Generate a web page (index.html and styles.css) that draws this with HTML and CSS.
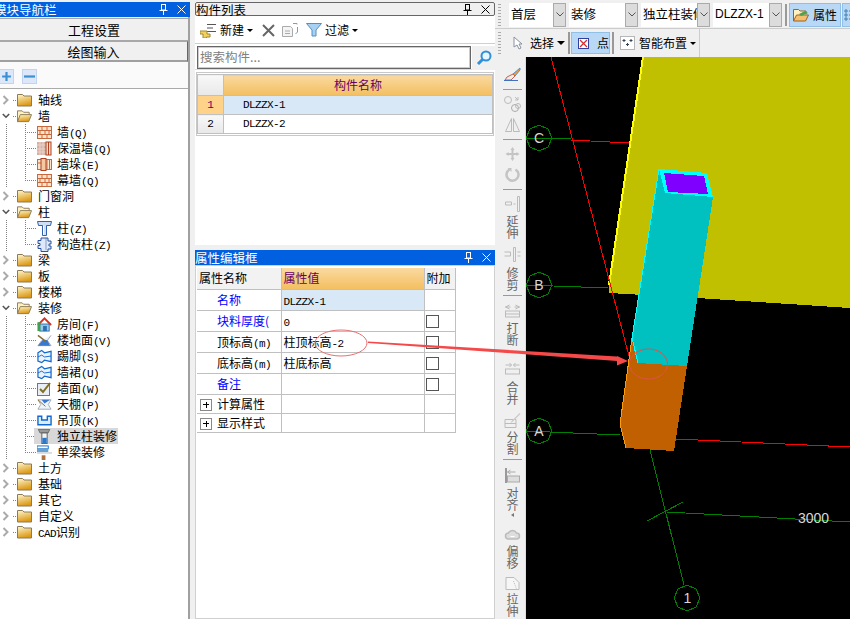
FILE: index.html
```html
<!DOCTYPE html>
<html lang="zh">
<head>
<meta charset="utf-8">
<title>构件</title>
<link rel="stylesheet" href="styles.css">
</head>
<body>
<svg class="defs" aria-hidden="true">
  <defs>
    <linearGradient id="fold" x1="0" y1="0" x2="0.3" y2="1"><stop offset="0" stop-color="#fff8d0"/><stop offset="1" stop-color="#dd9a18"/></linearGradient>
    <symbol id="folder" viewBox="0 0 15 14"><path d="M.5 3V1.500h5l1.500 1.500h7.500v10H.5z" fill="url(#fold)" stroke="#8a7a58"/></symbol>
    <symbol id="folderopen" viewBox="0 0 16 14"><path d="M.5 13V1.500h5L7 3h6v2.500" fill="#fff2c0" stroke="#8a7a58"/><path d="M.5 13l3-7.500h12l-3 7.500z" fill="url(#fold)" stroke="#8a7a58"/></symbol>
    <symbol id="chevr" viewBox="0 0 8 10"><path d="M1.500 1l4 4-4 4" fill="none" stroke="#aaa" stroke-width="2"/></symbol>
    <symbol id="chevd" viewBox="0 0 10 8"><path d="M1 1.500l4 4 4-4" fill="none" stroke="#555" stroke-width="2"/></symbol>
    <symbol id="brick" viewBox="0 0 15 13"><rect x=".5" y=".5" width="14" height="12" fill="#fbe4cc" stroke="#c8683c"/><path d="M.5 4.500h14M.5 8.500h14M5 .5v4M10 .5v4M3 4.500v4M8 4.500v4M12 4.500v4M5 8.500v4M10 8.500v4" stroke="#c8683c" fill="none"/></symbol>
    <symbol id="insul" viewBox="0 0 15 13"><rect width="9" height="13" fill="#d8b0a4"/><path d="M0 3h9M0 7h9M0 10h9M3 0v13M6 0v13" stroke="#e8d4cc"/><rect x="9" width="5" height="13" fill="#f4dcc8" stroke="#b04020"/><path d="M11.500 0v13" stroke="#b04020"/></symbol>
    <symbol id="pier" viewBox="0 0 15 13"><rect x=".5" y="1.500" width="14" height="10" fill="#fbe4cc" stroke="#c8683c"/><path d="M10 1.500v10M12.500 1.500v10M.5 5h5" stroke="#c8683c"/><rect x="4" y=".5" width="5" height="12" fill="#f4c8a0" stroke="#b04020"/></symbol>
    <symbol id="colm" viewBox="0 0 15 15"><path d="M.5.5h14l-1 4h-4v10h-4v-10h-4z" fill="#cfe0f6" stroke="#3060b0"/><path d="M6.500 5v9" stroke="#fff"/></symbol>
    <symbol id="cons" viewBox="0 0 15 14"><path d="M4 .5h7v3h3v3h-2v2h2v3h-3v2.500H4V11H1V8h2V6H1V3h3z" fill="#dfe8f8" stroke="#2850a0"/><path d="M9 1v12" stroke="#2850a0" stroke-dasharray="1 1"/></symbol>
    <symbol id="room" viewBox="0 0 16 15"><path d="M1 8l7-7 7 7" fill="#fff" stroke="#d83020" stroke-width="2"/><rect x="3" y="7" width="10" height="7.500" fill="#9cc8e8" stroke="#2870b0"/><rect x="6.500" y="9" width="4" height="5.500" fill="#2870b0"/><rect x=".5" y="5" width="3" height="9.500" fill="#40a050"/></symbol>
    <symbol id="floor" viewBox="0 0 16 13"><path d="M15 1L11 6.500 15 12H1l4-5.500" fill="#e8f0f8" stroke="#a0a8b4"/><path d="M1 12l5-6h5l3 6z" fill="#3878d0"/><path d="M1 1l9 7" stroke="#8a6a30" stroke-width="1.500"/></symbol>
    <symbol id="skirt" viewBox="0 0 16 14"><path d="M1 3l4-2.500 3 2.500 7-1.500v11L8 11 5 13.500 1 12z" fill="#eaf3fc" stroke="#1068d0" stroke-width="1.300"/><path d="M1 7.500l4-2 3 2 7-1" stroke="#1068d0" fill="none"/></symbol>
    <symbol id="face" viewBox="0 0 15 15"><rect x=".5" y="2.500" width="12" height="12" fill="#e8eef8" stroke="#687890"/><path d="M3 8l3 3 7-9" fill="none" stroke="#807020" stroke-width="2"/></symbol>
    <symbol id="ceil" viewBox="0 0 16 12"><path d="M1 1h14l-3 5 3 5H1l3-5z" fill="#eef4fa" stroke="#a0a8b4"/><path d="M8 5l6-4H5z" fill="#3878d0"/><path d="M1 1l8 7" stroke="#8a6a30"/></symbol>
    <symbol id="hang" viewBox="0 0 16 11"><path d="M1 1v9h14V1h-4v4H5V1z" fill="#dcebfa" stroke="#1068d0" stroke-width="1.500"/></symbol>
    <symbol id="colfin" viewBox="0 0 16 17"><path d="M1 .5h13l-2 4H3z" fill="#9a9a9a" stroke="#666"/><rect x="5" y="4.500" width="6" height="12" fill="#f4f4f4" stroke="#555"/><rect x="5.500" y="10" width="5" height="6" fill="#2878d0"/></symbol>
    <symbol id="beam" viewBox="0 0 16 16"><rect y="1" width="12" height="3" fill="#fff" stroke="#1068d0"/><rect y="3.500" width="12" height="4" fill="#68a0d0"/><path d="M0 8.500h16" stroke="#b0b8c4"/><rect x="5" y="11" width="4" height="5" fill="#b07040"/></symbol>
    <symbol id="mag" viewBox="0 0 16 16"><circle cx="10" cy="6" r="4.500" fill="#e8f6ff" stroke="#3090d8" stroke-width="2"/><path d="M6.500 9.500L2 14" stroke="#3090d8" stroke-width="3"/></symbol>
  </defs>
</svg>

<aside class="nav">
  <div class="title title-blue"><span class="title-text shift">模块导航栏</span><span class="winbtns"><svg class="pin" viewBox="0 0 9 11"><path d="M2 .5h5M2.500.5v5.500h4V.5M.5 6.500h8M4.500 6.500V11" fill="none" stroke="currentColor"/></svg><svg class="close" viewBox="0 0 9 9"><path d="M.5.5l8 8M8.500.5l-8 8" stroke="currentColor"/></svg></span></div>
  <div class="navbtn navbtn-a">工程设置</div>
  <div class="navbtn navbtn-b">绘图输入</div>
  <div class="treetools">
    <span class="tbtn tbtn-plus"><svg viewBox="0 0 10 10"><path d="M5 1v8M1 5h8" stroke="#3a90d0" stroke-width="2"/></svg></span>
    <span class="tbtn"><svg viewBox="0 0 10 10"><path d="M0 5h10" stroke="#3a90d0" stroke-width="2"/></svg></span>
  </div>
  <div class="tree">
    <div class="row top trunk"><svg class="tw"><use href="#chevr"/></svg><svg class="fo"><use href="#folder"/></svg><span class="lb">轴线</span></div>
    <div class="row top trunk"><svg class="tw"><use href="#chevd"/></svg><svg class="fo"><use href="#folderopen"/></svg><span class="lb">墙</span></div>
    <div class="row kid"><svg class="ic"><use href="#brick"/></svg><span class="lc">墙<i>(Q)</i></span></div>
    <div class="row kid"><svg class="ic"><use href="#insul"/></svg><span class="lc">保温墙<i>(Q)</i></span></div>
    <div class="row kid"><svg class="ic"><use href="#pier"/></svg><span class="lc">墙垛<i>(E)</i></span></div>
    <div class="row kid last"><svg class="ic"><use href="#brick"/></svg><span class="lc">幕墙<i>(Q)</i></span></div>
    <div class="row top trunk"><svg class="tw"><use href="#chevr"/></svg><svg class="fo"><use href="#folder"/></svg><span class="lb">门窗洞</span></div>
    <div class="row top trunk"><svg class="tw"><use href="#chevd"/></svg><svg class="fo"><use href="#folderopen"/></svg><span class="lb">柱</span></div>
    <div class="row kid"><svg class="ic"><use href="#colm"/></svg><span class="lc">柱<i>(Z)</i></span></div>
    <div class="row kid last"><svg class="ic"><use href="#cons"/></svg><span class="lc">构造柱<i>(Z)</i></span></div>
    <div class="row top trunk"><svg class="tw"><use href="#chevr"/></svg><svg class="fo"><use href="#folder"/></svg><span class="lb">梁</span></div>
    <div class="row top trunk"><svg class="tw"><use href="#chevr"/></svg><svg class="fo"><use href="#folder"/></svg><span class="lb">板</span></div>
    <div class="row top trunk"><svg class="tw"><use href="#chevr"/></svg><svg class="fo"><use href="#folder"/></svg><span class="lb">楼梯</span></div>
    <div class="row top trunk"><svg class="tw"><use href="#chevd"/></svg><svg class="fo"><use href="#folderopen"/></svg><span class="lb">装修</span></div>
    <div class="row kid"><svg class="ic"><use href="#room"/></svg><span class="lc">房间<i>(F)</i></span></div>
    <div class="row kid"><svg class="ic"><use href="#floor"/></svg><span class="lc">楼地面<i>(V)</i></span></div>
    <div class="row kid"><svg class="ic"><use href="#skirt"/></svg><span class="lc">踢脚<i>(S)</i></span></div>
    <div class="row kid"><svg class="ic"><use href="#skirt"/></svg><span class="lc">墙裙<i>(U)</i></span></div>
    <div class="row kid"><svg class="ic"><use href="#face"/></svg><span class="lc">墙面<i>(W)</i></span></div>
    <div class="row kid"><svg class="ic"><use href="#ceil"/></svg><span class="lc">天棚<i>(P)</i></span></div>
    <div class="row kid"><svg class="ic"><use href="#hang"/></svg><span class="lc">吊顶<i>(K)</i></span></div>
    <div class="row kid"><span class="sel"><svg class="ic"><use href="#colfin"/></svg><span class="lc">独立柱装修</span></span></div>
    <div class="row kid last"><svg class="ic"><use href="#beam"/></svg><span class="lc">单梁装修</span></div>
    <div class="row top"><svg class="tw"><use href="#chevr"/></svg><svg class="fo"><use href="#folder"/></svg><span class="lb">土方</span></div>
    <div class="row top"><svg class="tw"><use href="#chevr"/></svg><svg class="fo"><use href="#folder"/></svg><span class="lb">基础</span></div>
    <div class="row top"><svg class="tw"><use href="#chevr"/></svg><svg class="fo"><use href="#folder"/></svg><span class="lb">其它</span></div>
    <div class="row top"><svg class="tw"><use href="#chevr"/></svg><svg class="fo"><use href="#folder"/></svg><span class="lb">自定义</span></div>
    <div class="row top"><svg class="tw"><use href="#chevr"/></svg><svg class="fo"><use href="#folder"/></svg><span class="lb"><i>CAD</i>识别</span></div>
  </div>
</aside>

<main class="mid">
  <section class="list">
    <div class="title title-grey"><span class="title-text">构件列表</span><span class="winbtns"><svg class="pin" viewBox="0 0 9 11"><path d="M2 .5h5M2.500.5v5.500h4V.5M.5 6.500h8M4.500 6.500V11" fill="none" stroke="currentColor"/></svg><svg class="close" viewBox="0 0 9 9"><path d="M.5.5l8 8M8.500.5l-8 8" stroke="currentColor"/></svg></span></div>
    <div class="listbar">
      <svg class="lb-new" viewBox="0 0 17 15"><path d="M7 1.500h9M7 5h6M7 8.500h9" stroke="#555" fill="none"/><path d="M3 8h4v3h3v3H6.500v1H3v-4H0V8z" fill="#f0d060" stroke="#a08830"/></svg>
      <span class="lb-txt">新建</span><span class="caret"></span>
      <svg class="lb-x" viewBox="0 0 13 13"><path d="M1 1l11 11M12 1L1 12" stroke="#666" stroke-width="2"/></svg>
      <svg class="lb-copy" viewBox="0 0 17 14"><path d="M.5 3.500h8l2 2v8H.5z" fill="#f4f4f4" stroke="#aaa"/><path d="M3 8h5M3 10.500h5" stroke="#aaa"/><path d="M11 .5h4v1M15.500 4v5l-2 2" fill="none" stroke="#70a0d0"/></svg>
      <svg class="lb-filter" viewBox="0 0 16 14"><path d="M.5.5h15L10 7v6H6V7z" fill="#a8d0f0" stroke="#5090c8"/></svg>
      <span class="lb-txt">过滤</span><span class="caret"></span>
    </div>
    <div class="searchbar">
      <div class="search">搜索构件...</div>
      <div class="searchbtn"><svg class="mag"><use href="#mag"/></svg></div>
    </div>
    <div class="gridwrap">
      <table class="grid">
        <tr class="g-head"><td class="g-num"></td><td class="g-title">构件名称</td></tr>
        <tr class="g-row g-on"><td class="g-num">1</td><td class="g-name">DLZZX-1</td></tr>
        <tr class="g-row"><td class="g-num">2</td><td class="g-name">DLZZX-2</td></tr>
      </table>
    </div>
  </section>
  <section class="props">
    <div class="title title-blue"><span class="title-text">属性编辑框</span><span class="winbtns"><svg class="pin" viewBox="0 0 9 11"><path d="M2 .5h5M2.500.5v5.500h4V.5M.5 6.500h8M4.500 6.500V11" fill="none" stroke="currentColor"/></svg><svg class="close" viewBox="0 0 9 9"><path d="M.5.5l8 8M8.500.5l-8 8" stroke="currentColor"/></svg></span></div>
    <div class="propbody">
      <table class="ptab">
        <colgroup><col class="c1"><col class="c2"><col class="c3"></colgroup>
        <tr class="p-head"><td class="p-h1">属性名称</td><td class="p-hv">属性值</td><td class="p-h3">附加</td></tr>
        <tr><td class="pn blue">名称</td><td class="pv pv-on"><i>DLZZX-1</i></td><td></td></tr>
        <tr><td class="pn blue">块料厚度(</td><td class="pv"><i>0</i></td><td><span class="chk"></span></td></tr>
        <tr><td class="pn">顶标高<i>(m)</i></td><td class="pv">柱顶标高<i>-2</i></td><td><span class="chk"></span></td></tr>
        <tr><td class="pn">底标高<i>(m)</i></td><td class="pv">柱底标高</td><td><span class="chk"></span></td></tr>
        <tr><td class="pn blue">备注</td><td class="pv"></td><td><span class="chk"></span></td></tr>
        <tr class="p-grp"><td class="pg"><span class="plus"></span>计算属性</td><td></td><td></td></tr>
        <tr class="p-grp"><td class="pg"><span class="plus"></span>显示样式</td><td></td><td></td></tr>
      </table>
    </div>
  </section>
</main>

<section class="cad">
  <div class="bar bar1">
    <span class="handle"></span>
    <div class="combo c-a"><span class="val">首层</span><span class="arr"><svg viewBox="0 0 8 5"><path d="M.5.5L4 4 7.500.5" fill="none" stroke="#555"/></svg></span></div>
    <div class="combo c-b"><span class="val">装修</span><span class="arr"><svg viewBox="0 0 8 5"><path d="M.5.5L4 4 7.500.5" fill="none" stroke="#555"/></svg></span></div>
    <div class="combo c-c"><span class="val">独立柱装修</span><span class="arr"><svg viewBox="0 0 8 5"><path d="M.5.5L4 4 7.500.5" fill="none" stroke="#555"/></svg></span></div>
    <div class="combo c-d"><span class="val latin">DLZZX-1</span><span class="arr"><svg viewBox="0 0 8 5"><path d="M.5.5L4 4 7.500.5" fill="none" stroke="#555"/></svg></span></div>
    <span class="vsep"></span>
    <div class="tb-on tb-attr"><svg class="attr-ic" viewBox="0 0 16 14"><path d="M.5 13V1.500h5L7 3h6v3" fill="#fff2c0" stroke="#a06020"/><path d="M.5 13l3-6h12l-3 6z" fill="#f4c070" stroke="#a06020"/><path d="M6 6l6-3 3 2-7 3z" fill="#50a050"/></svg><span>属性</span></div>
    <div class="tb-on tb-next"><svg viewBox="0 0 9 14"><path d="M1 2h2v2H1zM1 6h2v2H1zM1 10h2v2H1zM5 3h4M5 7h4M5 11h4" stroke="#4080b0" fill="none"/></svg></div>
  </div>
  <div class="bar2wrap">
    <div class="bar bar2">
      <span class="handle"></span>
      <svg class="cur" viewBox="0 0 10 14"><path d="M1 1v10l3-2 2 4 2-1-2-4h3z" fill="#fff" stroke="#8890a0"/></svg>
      <span class="b2t">选择</span><span class="caret caret-b"></span>
      <span class="vsep vs2"></span>
      <div class="tb-on tb-pt"><svg viewBox="0 0 11 11"><rect x=".5" y=".5" width="10" height="10" fill="#fff" stroke="#3040a0"/><path d="M2 2l7 7M9 2L2 9" stroke="#d03030" stroke-width="1.300"/></svg><span>点</span></div>
      <span class="vsep vs3"></span>
      <svg class="smart" viewBox="0 0 15 14"><rect x=".5" y=".5" width="14" height="13" fill="#fff" stroke="#777" stroke-dasharray="1 1"/><path d="M4 3v3M2.500 4.500h3M11 3v3M9.500 4.500h3M7.500 7v3M6 8.500h3" stroke="#345"/></svg>
      <span class="b2t-s">智能布置</span><span class="caret"></span>
    </div>
  </div>
  <div class="work">
    <div class="vtools">
      <svg class="vi h14" viewBox="0 0 17 14"><path d="M16 1L9 7l2 2 5-6z" fill="#e8a040" stroke="#5090d0"/><path d="M9 7L3 10l-2 3h6l4-4z" fill="#f4ecdc" stroke="#c06060"/><path d="M0 13.500h14" stroke="#4070c0"/></svg>
      <span class="vsepx m8"></span>
      <svg class="vi h17 m5" viewBox="0 0 17 17"><circle cx="4" cy="5" r="3.500" fill="none" stroke="#bbb"/><circle cx="11" cy="13" r="3.500" fill="none" stroke="#aaa"/><circle cx="14" cy="11" r="2.500" fill="none" stroke="#bbb"/><path d="M11 2l3 3M14 2v3h-3" stroke="#bbb" fill="none"/></svg>
      <svg class="vi h14 m6" viewBox="0 0 16 14"><path d="M7 .5v13H1zM9 .5v13h6z" fill="none" stroke="#bbb"/></svg>
      <span class="vsepx m7"></span>
      <svg class="vi h14 m7" viewBox="0 0 14 14"><path d="M7 0l2 3H8v3h3V5l3 2-3 2V8H8v3h1l-2 3-2-3h1V8H3v1L0 7l3-2v1h3V3H5z" fill="#c4c4c4"/></svg>
      <svg class="vi h14 m7" viewBox="0 0 14 14"><path d="M4 1.500a6 6 0 1 0 6 0" fill="none" stroke="#c4c4c4" stroke-width="2.500"/><path d="M2 0h4v4z" fill="#c4c4c4"/></svg>
      <span class="vsepx m7"></span>
      <svg class="vi h16 m6" viewBox="0 0 16 16"><path d="M1 6h6v3H1zM9 8h2M13 .5v15h2V.5z" fill="none" stroke="#bbb"/></svg>
      <span class="vtx m3">延伸</span>
      <svg class="vi h15 m8" viewBox="0 0 16 15"><path d="M0 5h6v4H0M9 .5v14h2V.5zM13 5h3M13 9h3" fill="none" stroke="#bbb"/></svg>
      <span class="vtx m5">修剪</span>
      <span class="vsepx m4"></span>
      <svg class="vi h15 m7" viewBox="0 0 16 15"><path d="M5 2L1 4l4 2M11 2l4 2-4 2M1 4h5M10 4h5" fill="none" stroke="#bbb"/><rect x="1" y="8" width="14" height="6" fill="none" stroke="#bbb"/><path d="M1 11h14" stroke="#bbb"/></svg>
      <span class="vtx m4">打断</span>
      <svg class="vi h13 m16" viewBox="0 0 16 13"><path d="M5 1L7 3 5 5M11 1L9 3l2 2M1 3h6M9 3h6" fill="none" stroke="#bbb"/><rect x="1" y="7" width="14" height="5" fill="none" stroke="#bbb"/></svg>
      <span class="vtx m6">合并</span>
      <svg class="vi h16 m7" viewBox="0 0 16 16"><path d="M.5 7.500h11v8H.5zM.5 11.500h11" fill="none" stroke="#bbb"/><path d="M15 1L7 9l-1 2 2-1 8-8z" fill="#ccc"/></svg>
      <span class="vtx m3">分割</span>
      <span class="vsepx m4"></span>
      <svg class="vi h15 m8" viewBox="0 0 16 15"><path d="M1.500 0v15" stroke="#999" stroke-width="2"/><rect x="3" y="8" width="12" height="6" fill="#ddd" stroke="#aaa"/><path d="M3 4h8M6 2L3 4l3 2" stroke="#aaa" fill="none"/></svg>
      <span class="vtx m4">对齐</span>
      <span class="vcaret"></span>
      <svg class="vi h13 m10" viewBox="0 0 14 13"><path d="M3 12a3 3 0 0 1 0-6 4.500 4.500 0 0 1 8 0 3 3 0 0 1 0 6z" fill="#ddd" stroke="#bbb" stroke-width="1.500"/><path d="M5 9.500h4" stroke="#fff"/></svg>
      <span class="vtx m5">偏移</span>
      <svg class="vi h13 m8" viewBox="0 0 14 13"><path d="M.5.500h8l5 5v7H.5z" fill="#f6f6f6" stroke="#bbb"/><path d="M8 4l3 8" stroke="#bbb" stroke-dasharray="1 1"/></svg>
      <span class="vtx m3">拉伸</span>
    </div>
    <div class="canvas">
      <svg class="scene" viewBox="526 57 324 562" shape-rendering="crispEdges">
        <rect x="526" y="57" width="324" height="562" fill="#000"/>
        <polygon points="643,57 850,57 850,308 697,298 609,293 609,285" fill="#c0c000"/>
        <polyline points="643,57 609,285" fill="none" stroke="#ffff00" stroke-width="2"/>
        <polyline points="551,57 630,360" fill="none" stroke="#ff0000"/>
        <polyline points="571,140 629,143" fill="none" stroke="#ff0000"/>
        <polyline points="676,439 850,447" fill="none" stroke="#ff0000"/>
        <polygon points="632,338 620,424 626,448 674,451 687,366 638,363" fill="#c06000"/>
        <polyline points="632,338 620,424 626,448" fill="none" stroke="#ff9c00"/>
        <polygon points="659,169 632,338 638,363 687,366 713,197 707,173" fill="#00c0c0"/>
        <polyline points="659,169 632,338 638,363" fill="none" stroke="#00ffff"/>
        <polygon points="659,169 707,173 713,197 665,193" fill="#00ffff"/>
        <polygon points="664,173 704,176 708,194 668,192" fill="#8000ff"/>
        <g fill="none" stroke="#008000">
          <polyline points="526,138 571,139"/>
          <polyline points="526,285 608,288"/>
          <polyline points="526,431 620,435"/>
          <polyline points="650,450 684,585"/>
          <polyline points="647,521 683,502"/>
          <polyline points="667,512 850,522"/>
          <polygon points="539,125 548,129 552,138 548,147 539,151 530,147 526,138 530,129"/>
          <polygon points="539,272 548,276 552,285 548,294 539,298 530,294 526,285 530,276"/>
          <polygon points="539,418 548,422 552,431 548,440 539,444 530,440 526,431 530,422"/>
          <polygon points="687,585 696,589 700,598 696,607 687,611 678,607 674,598 678,589"/>
        </g>
        <g class="axis" shape-rendering="auto">
          <text x="539" y="143">C</text>
          <text x="539" y="290">B</text>
          <text x="539" y="436">A</text>
          <text x="687.500" y="603">1</text>
          <text class="dim" x="813.500" y="523">3000</text>
        </g>
      </svg>
    </div>
  </div>
</section>

<svg class="marks" viewBox="0 0 850 619" aria-hidden="true">
  <ellipse cx="341" cy="343" rx="26" ry="13" fill="none" stroke="#e87070"/>
  <ellipse cx="648.500" cy="364" rx="19" ry="15" fill="none" stroke="#e05050"/>
  <polygon points="368,341.500 617,356.500 617,356 628,361 617,365.500 617,361 368,343" fill="#f54848"/>
</svg>
</body>
</html>
```
FILE: styles.css
```css
* { box-sizing: border-box; }
html, body { margin: 0; padding: 0; }
body {
  width: 850px;
  height: 619px;
  overflow: hidden;
  display: flex;
  position: relative;
  background: #f0f0f0;
  font: 12px/16px "Noto Sans CJK SC", "Liberation Sans", sans-serif;
  color: #000;
}
i { font-style: normal; font-family: "Liberation Mono", monospace; font-size: 11px; letter-spacing: -.6px; line-height: 1; }
svg { display: block; flex: none; }
.defs { position: absolute; width: 0; height: 0; }

/* Title bars */
.title { height: 15px; display: flex; align-items: center; justify-content: space-between; flex: none; }
.title-blue { background: #0060e0; color: #fff; }
.title-grey { background: #f0f0f0; border: 1px solid #666; border-radius: 2px; height: 14px; color: #000; }
.title-text { font-size: 12.500px; line-height: 13px; white-space: nowrap; }
.shift { margin-left: -6px; }
.winbtns { display: flex; align-items: center; gap: 9px; padding-right: 4px; }
.pin { width: 9px; height: 11px; }
.close { width: 9px; height: 9px; }

/* Navigation */
.nav { width: 190px; margin-top: 2px; display: flex; flex-direction: column; flex: none; height: 617px; border-right: 2px solid #a0a0a0; }
.nav .title { margin-right: -2px; }
.navbtn { text-align: center; background: #f0f0f0; border: 1px solid #a8a8a8; border-left: 0; border-right: 0; font-size: 13px; }
.navbtn-a { height: 23px; margin-top: 1px; line-height: 21px; }
.navbtn-b { height: 21px; line-height: 19px; border-bottom: 2px solid #a0a0a0; border-right: 1px solid #666; }
.treetools { height: 27px; background: #fafafa; display: flex; align-items: flex-start; gap: 8px; padding-top: 7px; border-bottom: 1px solid #aaa; }
.tbtn { width: 15px; height: 15px; background: #dce8fa; border: 1px solid #c4d4ee; display: flex; align-items: center; justify-content: center; }
.tbtn svg { width: 11px; height: 11px; }
.tbtn-plus { margin-left: -1px; }
.tree { flex: 1; background: #fff; padding-top: 3px; }
.row { height: 16px; display: flex; align-items: center; white-space: nowrap; background-repeat: no-repeat; }
.top { padding-left: 2px; background-image: repeating-linear-gradient(to right, #808080 0 1px, transparent 1px 2px); background-size: 4px 1px; background-position: 13px 8px; }
.trunk { background-image: repeating-linear-gradient(to right, #808080 0 1px, transparent 1px 2px); }
.kid {
  padding-left: 37px;
  background-image:
    repeating-linear-gradient(to bottom, #808080 0 1px, transparent 1px 2px),
    repeating-linear-gradient(to bottom, #808080 0 1px, transparent 1px 2px),
    repeating-linear-gradient(to right, #808080 0 1px, transparent 1px 2px);
  background-size: 1px 16px, 1px 16px, 12px 1px;
  background-position: 6px 0, 25px 0, 25px 8px;
}
.last { background-size: 1px 16px, 1px 9px, 12px 1px; }
.tw { width: 8px; height: 10px; }
.fo { width: 15px; height: 14px; margin-left: 7px; }
.ic { width: 15px; height: 15px; }
.lb { margin-left: 6px; }
.lc { margin-left: 5px; }
.sel { display: flex; align-items: center; background: #d8d8d8; margin-left: -3px; padding-left: 3px; padding-right: 1px; height: 16px; }

/* Middle column */
.mid { width: 300px; margin-left: 5px; margin-top: 2px; display: flex; flex-direction: column; flex: none; }
.list { height: 243px; background: #fff; display: flex; flex-direction: column; flex: none; margin-bottom: 5px; }
.listbar { height: 28px; display: flex; align-items: center; padding: 1px 0 0 5px; border-bottom: 1px solid #d0d0d0; flex: none; }
.lb-new { width: 17px; height: 15px; }
.lb-txt { margin-left: 3px; }
.caret { width: 0; height: 0; border: 3px solid transparent; border-top: 3px solid #000; border-bottom: 0; margin-left: 3px; flex: none; }
.lb-x { width: 13px; height: 13px; margin-left: 9px; }
.lb-copy { width: 17px; height: 14px; margin-left: 7px; }
.lb-filter { width: 16px; height: 14px; margin-left: 7px; }
.searchbar { display: flex; height: 26px; padding-top: 2px; border-bottom: 1px solid #ddd; }
.search { width: 274px; height: 23px; margin-left: 2px; border: 1px solid #666; outline: 1px solid #ccc; outline-offset: -2px; color: #808080; font-size: 12.500px; line-height: 20px; padding-left: 2px; }
.searchbtn { flex: 1; margin-left: 1px; height: 24px; background: #f0f0f0; display: flex; align-items: center; justify-content: center; }
.mag { width: 16px; height: 16px; }
.gridwrap { margin: 2px 1px 0; border: 1px solid #c8c8c8; padding: 1px 0; width: 298px; }
.grid, .ptab { border-collapse: collapse; table-layout: fixed; }
.grid { width: 296px; }
.grid td { border: 1px solid #c0c0c0; padding: 0; }
.g-head { height: 21px; }
.g-num { width: 26px; text-align: center; background: linear-gradient(#f8f8f8, #e8e8e8); font-family: "Liberation Mono", monospace; font-size: 11px; }
.g-title { background: linear-gradient(#fad9a0, #f3bf60); text-align: center; color: #660066; }
.g-row { height: 19px; }
.g-name { padding-left: 19px !important; font-family: "Liberation Mono", monospace; font-size: 11px; letter-spacing: -.6px; }
.g-on .g-num { background: #ffd28a; color: #660066; }
.g-on .g-name { background: #d8e8f7; }

.props { flex: 1; display: flex; flex-direction: column; background: #fff; }
.propbody { flex: 1; border: 1px solid #d0d0d0; padding: 2px 0 0 1px; }
.ptab { width: 258px; }
.c1 { width: 84px; }
.c2 { width: 143px; }
.c3 { width: 31px; }
.ptab td { border: 1px solid #c0c0c0; padding: 0; height: 21px; white-space: nowrap; overflow: hidden; }
.p-head td { border-top: 0; }
.p-h1 { padding-left: 2px !important; background: #f2f2f2; border-left: 0 !important; }
.p-hv { background: linear-gradient(#fad9a0, #f3bf60); color: #660066; padding-left: 2px !important; }
.p-h3 { background: #f2f2f2; padding-left: 2px !important; }
.pn { padding-left: 20px !important; border-left: 0 !important; }
.pg { padding-left: 3px !important; border-left: 0 !important; }
.blue { color: #0000ff; }
.pv { padding-left: 2px !important; }
.pv-on { background: #d8e8f7; }
.p-grp td { height: 19px; }
.chk { display: block; width: 13px; height: 13px; border: 1px solid #555; margin: 2px 0 0 1px; background: #fff; }
.plus { display: inline-block; width: 12px; height: 12px; border: 1px solid #888; margin-right: 5px; vertical-align: -2px; background:
  linear-gradient(#000, #000) center / 6px 1px no-repeat,
  linear-gradient(#000, #000) center / 1px 6px no-repeat; }

/* CAD side */
.cad { flex: 1; min-width: 0; display: flex; flex-direction: column; }
.bar { display: flex; align-items: center; }
.bar1 { height: 29px; padding-top: 1px; border-bottom: 1px solid #ccc; }
.handle { width: 3px; height: 22px; margin-left: 3px; background: repeating-linear-gradient(to bottom, #aaa 0 1px, transparent 1px 3px); flex: none; }
.combo { display: flex; height: 24px; background: #fff; flex: none; }
.combo .val { flex: 1; padding-left: 2px; line-height: 22px; overflow: hidden; white-space: nowrap; font-size: 12.500px; }
.combo .latin { font-family: "Liberation Sans", sans-serif; font-size: 12px; }
.arr { width: 13px; background: #dcdcdc; border: 1px solid #aaa; display: flex; align-items: center; justify-content: center; flex: none; }
.arr svg { width: 8px; height: 5px; }
.c-a { width: 57px; margin-left: 8px; }
.c-b { width: 69px; margin-left: 3px; }
.c-c { width: 69px; margin-left: 3px; }
.c-d { width: 69px; margin-left: 3px; }
.vsep { width: 2px; height: 22px; background: #999; margin-left: 3px; flex: none; }
.tb-on { background: #b8d8f5; border: 1px solid #90c0e8; display: flex; align-items: center; flex: none; }
.tb-attr { width: 52px; height: 24px; margin-left: 2px; padding-left: 3px; gap: 4px; }
.attr-ic { width: 16px; height: 14px; }
.tb-next { width: 12px; height: 24px; margin-left: 1px; padding-left: 1px; }
.tb-next svg { width: 9px; height: 14px; }
.bar2wrap { height: 28px; flex: none; }
.bar2 { width: 205px; height: 28px; border-right: 1px solid #ccc; }
.cur { width: 10px; height: 14px; margin-left: 12px; }
.b2t { margin-left: 7px; }
.b2t-s { margin-left: 4px; }
.caret-b { border-width: 4px; border-top-width: 4px; margin-left: 3px; }
.vs2 { margin-left: 3px; }
.tb-pt { width: 39px; height: 22px; margin-left: 1px; padding-left: 6px; gap: 8px; }
.tb-pt svg { width: 11px; height: 11px; }
.vs3 { margin-left: 2px; }
.smart { width: 15px; height: 14px; margin-left: 6px; }

.work { flex: 1; display: flex; min-height: 0; }
.vtools { width: 31px; padding-left: 5px; padding-top: 10px; display: flex; flex-direction: column; align-items: center; flex: none; border-right: 1px solid #ddd; }
.vi { width: 17px; }
.h13 { height: 13px; }
.h14 { height: 14px; }
.h15 { height: 15px; }
.h16 { height: 16px; }
.h17 { height: 17px; }
.m3 { margin-top: 3px; }
.m4 { margin-top: 4px; }
.m5 { margin-top: 5px; }
.m6 { margin-top: 6px; }
.m7 { margin-top: 7px; }
.m8 { margin-top: 8px; }
.m10 { margin-top: 10px; }
.m16 { margin-top: 16px; }
.vsepx { width: 19px; height: 1px; background: #999; flex: none; }
.vtx { width: 12px; line-height: 12px; text-align: center; color: #666; word-break: break-all; flex: none; }
.vcaret { width: 0; height: 0; margin-top: 2px; border: 2px solid transparent; border-right: 3px solid #777; border-left: 0; flex: none; }
.canvas { flex: 1; min-width: 0; }
.scene { width: 324px; height: 562px; }
.axis text { fill: #d8d8d8; font: 14px "Liberation Sans", sans-serif; text-anchor: middle; }

.marks { position: absolute; left: 0; top: 0; width: 850px; height: 619px; pointer-events: none; }
```
